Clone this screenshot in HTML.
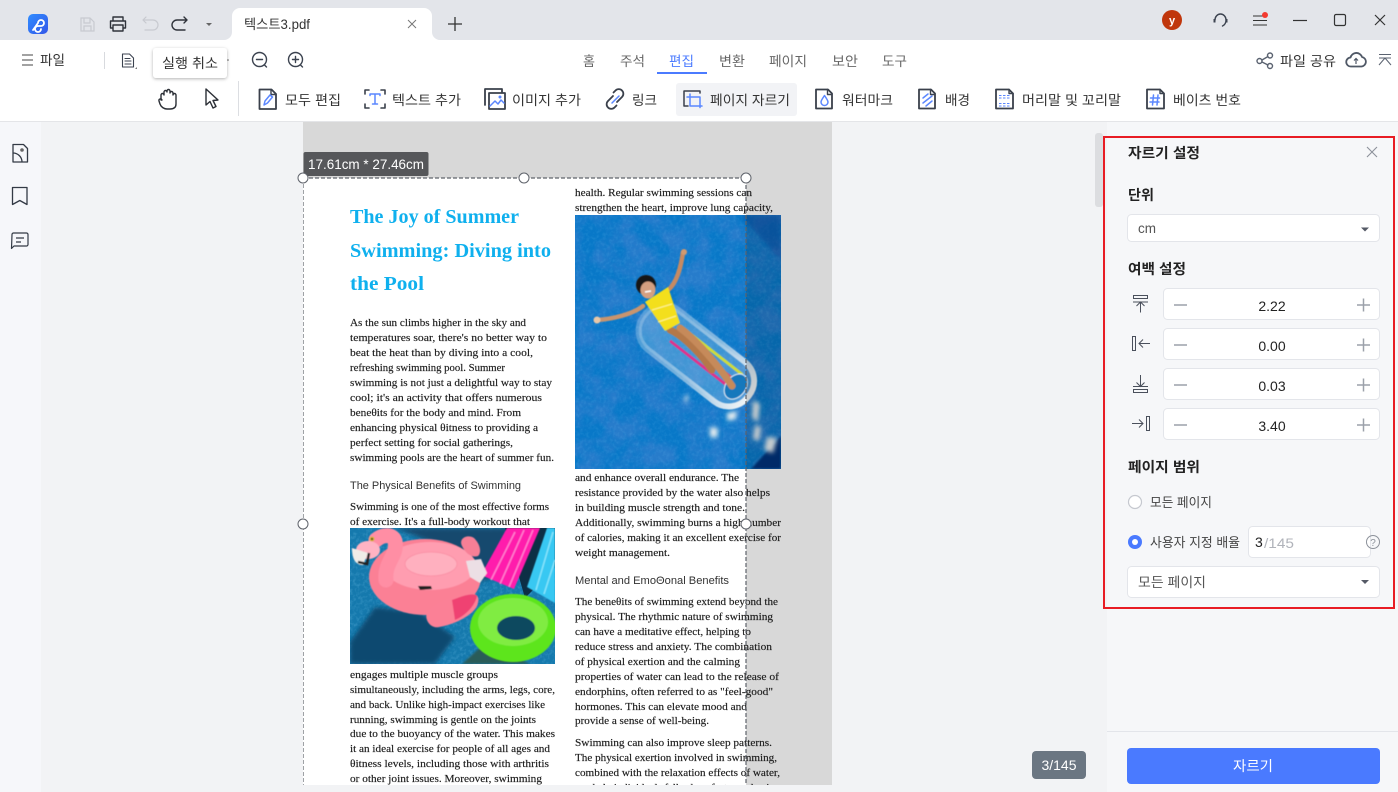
<!DOCTYPE html>
<html lang="ko"><head><meta charset="utf-8"><title>텍스트3.pdf</title>
<style>
html,body{margin:0;padding:0;background:#f2f3f5;width:1398px;height:792px;overflow:hidden}
svg{position:absolute;left:0;top:0;display:block}
text{font-family:"Liberation Sans","Noto Sans CJK KR",sans-serif;white-space:pre}
.k{font-size:13.5px;fill:#333;dominant-baseline:auto}
.tab{font-size:13.5px;fill:#666}
.b{font-size:14px;font-weight:700;fill:#222}
.d text,text.s{font-family:"Liberation Serif","DejaVu Serif",serif;font-size:11px;fill:#1c1c1c;stroke:#1c1c1c;stroke-width:.16}
.h{font-size:11px;fill:#333}
.ic{fill:none;stroke:#3c4350;stroke-width:1.4;stroke-linecap:round;stroke-linejoin:round}
.bl{fill:none;stroke:#5b87ff;stroke-width:1.5;stroke-linecap:round;stroke-linejoin:round}
.fr{fill:#fff;stroke:#e3e5ea;stroke-width:1}
.g{fill:none;stroke:#9ca1aa;stroke-width:1.5}
.v{font-size:14px;fill:#222;text-anchor:middle}
</style></head><body>
<svg width="1398" height="792" viewBox="0 0 1398 792" xmlns="http://www.w3.org/2000/svg">
<defs>
<linearGradient id="lg" x1="0" y1="0" x2="1" y2="1"><stop offset="0" stop-color="#2f8cff"/><stop offset="1" stop-color="#3457e8"/></linearGradient>
<linearGradient id="fg" x1="0" y1="0" x2="1" y2="0"><stop offset="0" stop-color="#cfe4f4" stop-opacity=".3"/><stop offset=".55" stop-color="#dfe9f0" stop-opacity=".55"/><stop offset="1" stop-color="#eef3f5" stop-opacity="1"/></linearGradient>
<filter id="wa" x="0" y="0" width="100%" height="100%"><feTurbulence type="fractalNoise" baseFrequency="0.045" numOctaves="4" seed="5"/><feColorMatrix values="0 0 0 0 0.02  0 0 0 0 0.2  0 0 0 0 0.6  1.8 1.8 0 0 -1.35"/></filter>
<filter id="wb" x="0" y="0" width="100%" height="100%"><feTurbulence type="fractalNoise" baseFrequency="0.3" numOctaves="2" seed="9"/><feColorMatrix values="0 0 0 0 0.3  0 0 0 0 0.72  0 0 0 0 1  1.4 0 0 0 -0.6"/></filter>
<filter id="bl0"><feGaussianBlur stdDeviation=".6"/></filter>
<filter id="bl1"><feGaussianBlur stdDeviation="1"/></filter>
<filter id="bl2"><feGaussianBlur stdDeviation="2.5"/></filter>
<filter id="sh" x="-20%" y="-20%" width="140%" height="150%"><feDropShadow dx="0" dy="1" stdDeviation="1.5" flood-color="#000" flood-opacity=".3"/></filter>
<clipPath id="c1"><rect x="575" y="215" width="206" height="254"/></clipPath>
<clipPath id="c2"><rect x="350" y="528" width="205" height="136"/></clipPath>
<clipPath id="cp"><rect x="303" y="122" width="529" height="663"/></clipPath>
</defs>

<!-- backgrounds -->
<rect width="1398" height="792" fill="#f2f3f5"/>
<rect width="1398" height="40" fill="#e3e5ea"/>
<rect y="40" width="1398" height="81" fill="#fff"/>
<rect y="121" width="1398" height="1" fill="#e4e5e8"/>
<rect y="122" width="41" height="670" fill="#f6f7fa"/>
<rect x="1107" y="122" width="291" height="670" fill="#f6f7f9"/>

<!-- title bar -->
<rect x="28" y="14" width="20" height="20" rx="5" fill="url(#lg)"/>
<path d="M33 30l5-7a3 3 0 1 1 3 3h-3a3 3 0 1 0 3 3" fill="none" stroke="#fff" stroke-width="1.8" stroke-linecap="round"/>
<path d="M81 18h9l4 4v9H81zM84 18v5h6v-5M84 31v-5h7v5" fill="none" stroke="#c8cad0" stroke-width="1.2"/>
<path d="M113 21v-4h10v4M113 28h-2.500v-7h15v7H123M113 25h10v6h-10z" class="ic" style="stroke:#2f333b"/>
<path d="M143 20h10a4.500 4.500 0 0 1 0 10h-8M143 20l3-3M143 20l3 3" fill="none" stroke="#c8cad0" stroke-width="1.2" stroke-linecap="round"/>
<path d="M187 20h-10a4.500 4.500 0 0 0 0 10h8M187 20l-3-3M187 20l-3 3" class="ic" style="stroke:#2f333b"/>
<path d="M206 23h6l-3 3z" fill="#666"/>
<path d="M224 40a8 8 0 0 0 8-8V16a8 8 0 0 1 8-8h184a8 8 0 0 1 8 8v16a8 8 0 0 0 8 8z" fill="#fff"/>
<text x="244" y="29" font-size="13.500" fill="#333" textLength="66" lengthAdjust="spacingAndGlyphs">텍스트3.pdf</text>
<path d="M408 20l8 8M416 20l-8 8" stroke="#777" stroke-width="1" fill="none"/>
<path d="M448 24h14M455 17v14" stroke="#333" stroke-width="1.300" fill="none"/>
<circle cx="1172" cy="20" r="10" fill="#c0360c"/>
<text x="1172" y="24" font-size="11" font-weight="700" fill="#fff" text-anchor="middle">y</text>
<path d="M1215 20a5.500 6 0 0 1 11 0c0 3-1.500 5-3.500 6" class="ic"/><rect x="1213.500" y="19" width="2" height="3.500" fill="#3c4350"/><rect x="1225.500" y="19" width="2" height="3.500" fill="#3c4350"/>
<path d="M1253 16h11M1253 20.500h14M1253 25h14" stroke="#333" stroke-width="1.100" fill="none"/><circle cx="1265" cy="15" r="3" fill="#f33a30"/>
<path d="M1293 20.500h14" stroke="#333" stroke-width="1.200"/>
<rect x="1334.500" y="14.500" width="11" height="11" rx="1.500" fill="none" stroke="#333" stroke-width="1.200"/>
<path d="M1375 15l10 10M1385 15l-10 10" stroke="#333" stroke-width="1.200"/>

<!-- row 2 -->
<path d="M22 55h11M22 60h11M22 65h11" stroke="#444" stroke-width="1"/>
<text x="40" y="65" class="k" textLength="25" lengthAdjust="spacingAndGlyphs">파일</text>
<rect x="104" y="52" width="1" height="17" fill="#d8dade"/>
<path d="M122.500 54h7l4 4v9h-11zM125 58.500h5M125 61h6M125 64h6" class="ic" style="stroke-width:1.100"/>
<path d="M135 69h2v-2z" fill="#777"/>
<circle cx="228" cy="60" r=".8" fill="#666"/>
<circle cx="259.500" cy="59.500" r="7" class="ic"/><path d="M256.500 59.500h6M264.500 65l2 2" class="ic"/>
<circle cx="295.500" cy="59.500" r="7" class="ic"/><path d="M292.500 59.500h6M295.500 56.500v6M300.500 65l2 2" class="ic"/>
<rect x="153" y="48" width="74" height="30" rx="3" fill="#fff" filter="url(#sh)"/>
<text x="162" y="68" class="k" textLength="56" lengthAdjust="spacingAndGlyphs">실행 취소</text>

<text x="583" y="66" class="tab" textLength="12" lengthAdjust="spacingAndGlyphs">홈</text>
<text x="620" y="66" class="tab" textLength="25" lengthAdjust="spacingAndGlyphs">주석</text>
<text x="669" y="66" class="tab" style="fill:#4b7bff" textLength="25" lengthAdjust="spacingAndGlyphs">편집</text>
<rect x="657" y="72" width="50" height="2" fill="#4b7bff"/>
<text x="719" y="66" class="tab" textLength="26" lengthAdjust="spacingAndGlyphs">변환</text>
<text x="769" y="66" class="tab" textLength="38" lengthAdjust="spacingAndGlyphs">페이지</text>
<text x="832" y="66" class="tab" textLength="26" lengthAdjust="spacingAndGlyphs">보안</text>
<text x="882" y="66" class="tab" textLength="25" lengthAdjust="spacingAndGlyphs">도구</text>

<circle cx="1259.500" cy="61" r="2.500" class="ic" style="stroke:#5a6270"/><circle cx="1270" cy="55.500" r="2.500" class="ic" style="stroke:#5a6270"/><circle cx="1270" cy="66" r="2.500" class="ic" style="stroke:#5a6270"/><path d="M1262 60l6-3.500M1262 62l6 3" class="ic" style="stroke:#5a6270"/>
<text x="1280" y="66" class="k" textLength="56" lengthAdjust="spacingAndGlyphs">파일 공유</text>
<path d="M1351 66.500a4.500 4.500 0 0 1-.5-9 6 6 0 0 1 11.500-.5 4.800 4.800 0 0 1-.5 9.500z" fill="none" stroke="#4f5866" stroke-width="1.800" stroke-linejoin="round"/><path d="M1356 64v-5M1354 60.500l2-2 2 2" fill="none" stroke="#4f5866" stroke-width="1.200"/>
<path d="M1379 54.500h12M1379 58h12M1385 58l-6 7M1385 58l6 7" fill="none" stroke="#5a6270" stroke-width="1"/>

<!-- toolbar -->
<path d="M161 100v-5a1.500 1.500 0 0 1 3 0v-3a1.500 1.500 0 0 1 3 0v-1a1.500 1.500 0 0 1 3 0v2a1.500 1.500 0 0 1 3 0v2a1.500 1.500 0 0 1 3 0v9c0 4-3 5-6 5h-3c-3 0-6-2-7-5l-1-3c-.5-2 2-3 3-1z" class="ic" style="stroke:#2b2f36"/>
<path d="M206 89l0 16 4-3.500 3 6.500 3-1.500-3-6 5-.5z" class="ic" style="stroke:#2b2f36"/>
<rect x="238" y="81" width="1" height="35" fill="#dcdee2"/>

<path d="M259.500 89.500h12l4.500 4.500v15h-16.500z" class="ic" style="stroke:#3a404b;stroke-width:1.800"/><path d="M271 89.500v5h5" class="ic"/><path d="M264 105l1-4 5-6 2.500 2-5 6z" class="bl"/>
<text x="285" y="105" class="k" textLength="56" lengthAdjust="spacingAndGlyphs">모두 편집</text>
<path d="M365 94v-4h4M381 90h4v4M385 104v4h-4M369 108h-4v-4" class="ic" style="stroke:#3a404b;stroke-width:1.600"/><path d="M370 94h10M375 94v10M372.500 104h5M370 94v1.500M380 94v1.500" class="bl"/>
<text x="392" y="105" class="k" textLength="69" lengthAdjust="spacingAndGlyphs">텍스트 추가</text>
<path d="M485 105V89h17v3" class="ic" style="stroke:#3a404b;stroke-width:1.800"/><rect x="489" y="93" width="16" height="16" class="ic" style="stroke:#3a404b;stroke-width:1.800"/><path d="M490 106l5-5 3 3 3-4 3 3" class="bl"/><circle cx="500" cy="97" r="1.500" fill="#5b87ff"/>
<text x="512" y="105" class="k" textLength="69" lengthAdjust="spacingAndGlyphs">이미지 추가</text>
<path d="M613 96l-5 5a4.500 4.500 0 0 0 6.500 6.500l2-2M617 102l5-5a4.500 4.500 0 0 0-6.500-6.500l-2 2" class="ic" style="stroke:#3a404b;stroke-width:1.800"/><path d="M612 103l7-7" class="bl"/>
<text x="632" y="105" class="k" textLength="25" lengthAdjust="spacingAndGlyphs">링크</text>
<rect x="676" y="83" width="121" height="33" rx="3" fill="#f2f3f6"/>
<path d="M688 106h-4V91h16v2" class="ic" style="stroke:#3a404b;stroke-width:1.500"/><path d="M690 94v12h12M687 97h13v10.500" class="bl"/>
<text x="710" y="105" class="k" textLength="80" lengthAdjust="spacingAndGlyphs">페이지 자르기</text>
<path d="M816 89.500h12l4 4v15h-16z" class="ic" style="stroke:#3a404b;stroke-width:1.800"/><path d="M827.500 89.500v5h4.500" class="ic"/><path d="M824.500 95.500c2 3 3.500 5 3.500 6.500a3.500 3.500 0 0 1-7 0c0-1.500 1.500-3.500 3.500-6.500z" class="bl"/>
<text x="842" y="105" class="k" textLength="51" lengthAdjust="spacingAndGlyphs">워터마크</text>
<path d="M919 89.500h12l4 4v15h-16z" class="ic" style="stroke:#3a404b;stroke-width:1.800"/><path d="M930.500 89.500v5h4.500" class="ic"/><path d="M923 98l5-4M923 103l9-7M926 106l6-5" class="bl"/>
<text x="945" y="105" class="k" textLength="25" lengthAdjust="spacingAndGlyphs">배경</text>
<path d="M996 89.500h13l4 4v15h-17z" class="ic" style="stroke:#3a404b;stroke-width:1.800"/><path d="M1009 89.500v4h4" class="ic"/><path d="M999 95.500h11M999 98h11M999 103.500h11M999 106h11" fill="none" stroke="#5b87ff" stroke-width="1" stroke-dasharray="2.500 1.500"/>
<text x="1022" y="105" class="k" textLength="99" lengthAdjust="spacingAndGlyphs">머리말 및 꼬리말</text>
<path d="M1147 89.500h13l4 4v15h-17z" class="ic" style="stroke:#3a404b;stroke-width:1.800"/><path d="M1160 89.500v4h4" class="ic"/><path d="M1153.500 95l-1 10M1158 95l-1 10M1150.500 98h9M1150 102h9" class="bl"/>
<text x="1173" y="105" class="k" textLength="68" lengthAdjust="spacingAndGlyphs">베이츠 번호</text>

<!-- left sidebar -->
<path d="M13 144.500h10.500l4 4v13.500H13z" fill="none" stroke="#333a45" stroke-width="1.300" stroke-linejoin="round"/><path d="M13 153c5 0 9 4 9 9" fill="none" stroke="#333a45" stroke-width="1.300"/><circle cx="22" cy="150" r="1.800" fill="#666"/>
<path d="M12.500 187.500h14.500v17l-7.200-4-7.300 4z" fill="none" stroke="#333a45" stroke-width="1.300" stroke-linejoin="round"/>
<path d="M12 234.500a1.500 1.500 0 0 1 1.500-1.500h13a1.500 1.500 0 0 1 1.500 1.500v10a1.500 1.500 0 0 1-1.500 1.500H14l-2.500 2.500zM16 238h8M16 242h5" fill="none" stroke="#333a45" stroke-width="1.200" stroke-linejoin="round"/>

<!-- document -->
<g clip-path="url(#cp)">
<rect x="303" y="122" width="529" height="663" fill="#d8d8d8"/>
<rect x="303" y="178" width="443" height="607" fill="#fff"/>

<g>
<text x="350" y="223" font-size="20" font-weight="700" fill="#0fb0ee" style="font-family:'Liberation Serif',serif" textLength="169" lengthAdjust="spacingAndGlyphs">The Joy of Summer</text>
<text x="350" y="257" font-size="20" font-weight="700" fill="#0fb0ee" style="font-family:'Liberation Serif',serif" textLength="201" lengthAdjust="spacingAndGlyphs">Swimming: Diving into</text>
<text x="350" y="290" font-size="20" font-weight="700" fill="#0fb0ee" style="font-family:'Liberation Serif',serif" textLength="74" lengthAdjust="spacingAndGlyphs">the Pool</text>
</g>
<g class="d">
<text x="350" y="326" textLength="176" lengthAdjust="spacingAndGlyphs">As the sun climbs higher in the sky and</text>
<text x="350" y="341" textLength="197" lengthAdjust="spacingAndGlyphs">temperatures soar, there's no better way to</text>
<text x="350" y="356" textLength="183" lengthAdjust="spacingAndGlyphs">beat the heat than by diving into a cool,</text>
<text x="350" y="371" textLength="155" lengthAdjust="spacingAndGlyphs">refreshing swimming pool. Summer</text>
<text x="350" y="386" textLength="202" lengthAdjust="spacingAndGlyphs">swimming is not just a delightful way to stay</text>
<text x="350" y="401" textLength="192" lengthAdjust="spacingAndGlyphs">cool; it's an activity that offers numerous</text>
<text x="350" y="416" textLength="171" lengthAdjust="spacingAndGlyphs">beneθits for the body and mind. From</text>
<text x="350" y="431" textLength="188" lengthAdjust="spacingAndGlyphs">enhancing physical θitness to providing a</text>
<text x="350" y="446" textLength="163" lengthAdjust="spacingAndGlyphs">perfect setting for social gatherings,</text>
<text x="350" y="461" textLength="204" lengthAdjust="spacingAndGlyphs">swimming pools are the heart of summer fun.</text>
<text x="350" y="510" textLength="199" lengthAdjust="spacingAndGlyphs">Swimming is one of the most effective forms</text>
<text x="350" y="525" textLength="180" lengthAdjust="spacingAndGlyphs">of exercise. It's a full-body workout that</text>
<text x="350" y="678" textLength="148" lengthAdjust="spacingAndGlyphs">engages multiple muscle groups</text>
<text x="350" y="693" textLength="205" lengthAdjust="spacingAndGlyphs">simultaneously, including the arms, legs, core,</text>
<text x="350" y="708" textLength="195" lengthAdjust="spacingAndGlyphs">and back. Unlike high-impact exercises like</text>
<text x="350" y="723" textLength="186" lengthAdjust="spacingAndGlyphs">running, swimming is gentle on the joints</text>
<text x="350" y="737" textLength="205" lengthAdjust="spacingAndGlyphs">due to the buoyancy of the water. This makes</text>
<text x="350" y="752" textLength="200" lengthAdjust="spacingAndGlyphs">it an ideal exercise for people of all ages and</text>
<text x="350" y="767" textLength="199" lengthAdjust="spacingAndGlyphs">θitness levels, including those with arthritis</text>
<text x="350" y="782" textLength="192" lengthAdjust="spacingAndGlyphs">or other joint issues. Moreover, swimming</text>

<text x="575" y="196" textLength="177" lengthAdjust="spacingAndGlyphs">health. Regular swimming sessions can</text>
<text x="575" y="211" textLength="198" lengthAdjust="spacingAndGlyphs">strengthen the heart, improve lung capacity,</text>
<text x="575" y="481" textLength="164" lengthAdjust="spacingAndGlyphs">and enhance overall endurance. The</text>
<text x="575" y="496" textLength="195" lengthAdjust="spacingAndGlyphs">resistance provided by the water also helps</text>
<text x="575" y="511" textLength="170" lengthAdjust="spacingAndGlyphs">in building muscle strength and tone.</text>
<text x="575" y="526" textLength="206" lengthAdjust="spacingAndGlyphs">Additionally, swimming burns a high number</text>
<text x="575" y="541" textLength="206" lengthAdjust="spacingAndGlyphs">of calories, making it an excellent exercise for</text>
<text x="575" y="556" textLength="95" lengthAdjust="spacingAndGlyphs">weight management.</text>
<text x="575" y="605" textLength="203" lengthAdjust="spacingAndGlyphs">The beneθits of swimming extend beyond the</text>
<text x="575" y="620" textLength="198" lengthAdjust="spacingAndGlyphs">physical. The rhythmic nature of swimming</text>
<text x="575" y="635" textLength="176" lengthAdjust="spacingAndGlyphs">can have a meditative effect, helping to</text>
<text x="575" y="650" textLength="197" lengthAdjust="spacingAndGlyphs">reduce stress and anxiety. The combination</text>
<text x="575" y="665" textLength="165" lengthAdjust="spacingAndGlyphs">of physical exertion and the calming</text>
<text x="575" y="680" textLength="204" lengthAdjust="spacingAndGlyphs">properties of water can lead to the release of</text>
<text x="575" y="695" textLength="198" lengthAdjust="spacingAndGlyphs">endorphins, often referred to as "feel-good"</text>
<text x="575" y="710" textLength="172" lengthAdjust="spacingAndGlyphs">hormones. This can elevate mood and</text>
<text x="575" y="724" textLength="134" lengthAdjust="spacingAndGlyphs">provide a sense of well-being.</text>
<text x="575" y="746" textLength="197" lengthAdjust="spacingAndGlyphs">Swimming can also improve sleep patterns.</text>
<text x="575" y="761" textLength="202" lengthAdjust="spacingAndGlyphs">The physical exertion involved in swimming,</text>
<text x="575" y="776" textLength="205" lengthAdjust="spacingAndGlyphs">combined with the relaxation effects of water,</text>
<text x="575" y="791" textLength="205" lengthAdjust="spacingAndGlyphs">can help individuals fall asleep faster and enjoy</text>
</g>
<text x="350" y="489" class="h" textLength="171" lengthAdjust="spacingAndGlyphs">The Physical Benefits of Swimming</text>
<text x="575" y="584" class="h" textLength="154" lengthAdjust="spacingAndGlyphs">Mental and EmoΘonal Benefits</text>

<!-- flamingo image -->
<g clip-path="url(#c2)">
<rect x="350" y="528" width="205" height="136" fill="#1579ad"/>
<rect x="350" y="528" width="205" height="136" filter="url(#wb)" opacity=".35"/>
<path d="M395 528h115l-18 50-30 8-20-40z" fill="#124a6e" filter="url(#bl2)"/>
<path d="M350 664v-22l25-35 45 5 35 25-20 27z" fill="#104a70" filter="url(#bl2)"/>
<path d="M462 664l24-22 44 22z" fill="#2a5b58" filter="url(#bl1)"/>
<path d="M505 528h50v40l-30 30z" fill="#0c2f45"/>
<g filter="url(#bl0)">
<path d="M507 528h33l-26 61-33-14z" fill="#ff1cac"/>
<path d="M515 532l-24 48M524 530l-24 54M533 530l-24 57" stroke="#ff7fd0" stroke-width="1.500" fill="none"/>
<path d="M547 528h8v75l-28-16z" fill="#38c8f2"/>
<path d="M553 532l-17 58M555 560l-11 34" stroke="#86e4fb" stroke-width="1.500" fill="none"/>
<ellipse cx="425" cy="577" rx="56" ry="38" fill="#fb8095"/>
<ellipse cx="430" cy="566" rx="46" ry="24" fill="#ff9db0"/>
<ellipse cx="431" cy="564" rx="26" ry="12" fill="#ffb0bf" stroke="#fb93a7"/>
<path d="M386 580C384 562 398 556 395 541C393 534 383 534 376 540" fill="none" stroke="#ff8ea4" stroke-width="15" stroke-linecap="round"/>
<ellipse cx="368" cy="550" rx="12" ry="9" fill="#ffb3c3"/>
<path d="M352 548c0 12 4 17 11 17l5-12z" fill="#f0ece8"/>
<path d="M358 562l9 2 2-11" fill="none" stroke="#222" stroke-width="2.500"/>
<circle cx="372" cy="539" r="2.500" fill="#d8b030"/><circle cx="372" cy="539" r="1" fill="#222"/>
<path d="M462 546c-4-8 6-12 12-8 6 6 8 14 4 18-6 2-12-2-16-10z" fill="#f77f96"/>
<path d="M466 561l15-2 6 14-7 10-10-6z" fill="#ecdfe5"/>
<path d="M418 586h13l1 3-12 1z" fill="#222"/>
<path d="M427 612c8-10 26-16 40-18 12-2 13 5 10 12-5 10-24 19-38 21-8 2-15-7-12-15z" fill="#fb8096"/>
<path d="M452 600c10-4 22-8 25-4-2 10-12 20-22 24z" fill="#ef4372"/>
<ellipse cx="513" cy="628" rx="43" ry="34" fill="#5de51f"/>
<ellipse cx="513" cy="622" rx="35" ry="24" fill="#9cf25e" opacity=".55"/>
<ellipse cx="516" cy="628" rx="19" ry="12" fill="#0f4a5f"/>
</g>
</g>

<!-- pool image -->
<g clip-path="url(#c1)">
<rect x="575" y="215" width="206" height="254" fill="#0878c8"/>
<rect x="575" y="215" width="206" height="254" filter="url(#wa)"/>
<rect x="575" y="215" width="206" height="254" filter="url(#wb)" opacity=".2"/>
<path d="M740 215h41v45z" fill="#0b4ba5" opacity=".5" filter="url(#bl2)"/>
<path d="M781 436l-30 33h30z" fill="#06327a" filter="url(#bl1)"/>
<g filter="url(#bl0)">
<g transform="translate(697 355) rotate(38)">
<rect x="-66" y="-24" width="132" height="50" rx="24" fill="#9ec8e8" fill-opacity=".35" stroke="url(#fg)" stroke-width="6"/>
<rect x="-22" y="-14" width="70" height="3" fill="#cfdc3a"/>
<rect x="-30" y="-5" width="78" height="3" fill="#d84e70"/>
<rect x="-30" y="4" width="78" height="3" fill="#e0308c"/>
<ellipse cx="50" cy="1" rx="10" ry="14" fill="#1378bc" stroke="#e0eef6" stroke-width="1"/>
</g>
<path d="M643 306c-10 8-30 13-46 14" fill="none" stroke="#c9946e" stroke-width="4.500" stroke-linecap="round"/>
<path d="M668 290c8-6 13-22 15-38" fill="none" stroke="#c68a62" stroke-width="4.500" stroke-linecap="round"/>
<circle cx="597" cy="320" r="3.500" fill="#e8c8a8"/><circle cx="684" cy="252" r="3" fill="#d09a70"/>
<path d="M670 330c14 6 32 26 42 40" fill="none" stroke="#b4784a" stroke-width="7" stroke-linecap="round"/>
<path d="M680 328c14 10 36 34 52 58" fill="none" stroke="#c68a5a" stroke-width="7" stroke-linecap="round"/>
<path d="M645 302l23-15 12 36-15 8z" fill="#f3df1c"/>
<path d="M652 310l20-6M658 322l18-6" stroke="#fff39a" stroke-width="1" fill="none"/>
<circle cx="646" cy="285" r="10" fill="#141414"/>
<ellipse cx="648" cy="290" rx="7.500" ry="8.500" fill="#d39f80"/>
<path d="M645 292l6-1" stroke="#fff" stroke-width="1.500"/>
</g>
<g fill="#e8eef0" filter="url(#bl2)"><path d="M727 413l10-2-1 8-9 2zM710 427l8 1-1 10-7-1zM753 400l7 4-2 18-6-4zM755 425l6 2-2 14-6-2zM767 437l10 1-4 15-9-3zM686 404l3-10-5 4z"/></g>
</g>

<!-- dim overlay on the part of the image outside the crop -->
<rect x="746" y="215" width="35" height="254" fill="#000" opacity=".14"/>
<path d="M303 178H746V785M303 178V785" fill="none" stroke="#5f636b" stroke-width="1.200" stroke-dasharray="4 2"/>
</g>
<rect x="303.500" y="152" width="125" height="24" rx="2" fill="#56575a"/>
<text x="308" y="169" font-size="14" fill="#fff" textLength="116" lengthAdjust="spacingAndGlyphs">17.61cm * 27.46cm</text>
<g fill="#fff" stroke="#5f636b" stroke-width="1"><circle cx="303" cy="178" r="5"/><circle cx="524" cy="178" r="5"/><circle cx="746" cy="178" r="5"/><circle cx="303" cy="524" r="5"/><circle cx="746" cy="524" r="5"/></g>

<!-- scrollbar -->
<rect x="1095" y="133" width="8" height="74" rx="3" fill="#dcdde0"/>

<!-- page badge -->
<rect x="1032" y="751" width="54" height="28" rx="4" fill="#6b7682"/>
<text x="1059" y="770" font-size="14" fill="#fff" text-anchor="middle">3/145</text>

<!-- right panel -->
<rect x="1104" y="137" width="290" height="471" fill="none" stroke="#e81c24" stroke-width="2"/>
<text x="1128" y="158" class="b" textLength="72" lengthAdjust="spacingAndGlyphs">자르기 설정</text>
<path d="M1367 147l10 10M1377 147l-10 10" stroke="#8c919a" stroke-width="1.100"/>
<text x="1128" y="200" class="b" textLength="26" lengthAdjust="spacingAndGlyphs">단위</text>
<rect x="1127.500" y="214.500" width="252" height="27" rx="4" class="fr"/>
<text x="1138" y="233" font-size="13.500" fill="#555">cm</text>
<path d="M1361 227.500h8l-4 4z" fill="#555a66"/>
<text x="1128" y="274" class="b" textLength="58" lengthAdjust="spacingAndGlyphs">여백 설정</text>

<rect x="1163.500" y="288.500" width="216" height="31" rx="4" class="fr"/>
<path d="M1174 305h13M1357 305h13M1363.500 298.500v13" class="g"/><text x="1272" y="311" class="v">2.22</text>
<rect x="1163.500" y="328.500" width="216" height="31" rx="4" class="fr"/>
<path d="M1174 345h13M1357 345h13M1363.500 338.500v13" class="g"/><text x="1272" y="351" class="v">0.00</text>
<rect x="1163.500" y="368.500" width="216" height="31" rx="4" class="fr"/>
<path d="M1174 385h13M1357 385h13M1363.500 378.500v13" class="g"/><text x="1272" y="391" class="v">0.03</text>
<rect x="1163.500" y="408.500" width="216" height="31" rx="4" class="fr"/>
<path d="M1174 425h13M1357 425h13M1363.500 418.500v13" class="g"/><text x="1272" y="431" class="v">3.40</text>

<g fill="none" stroke="#4a505c" stroke-width="1">
<rect x="1133.500" y="295.500" width="14" height="3"/><path d="M1133 302h15M1140.500 312.500v-10M1136.500 306l4-4 4 4"/>
<rect x="1132.500" y="336.500" width="3" height="14"/><path d="M1139 343.500h11M1143 339.500l-4 4 4 4"/>
<rect x="1133.500" y="389.500" width="14" height="3"/><path d="M1133 386.500h15M1140.500 375v11M1136.500 382.500l4 4 4-4"/>
<rect x="1146.500" y="416.500" width="3" height="14"/><path d="M1132 423.500h11M1139 419.500l4 4-4 4"/>
</g>

<text x="1128" y="472" class="b" textLength="72" lengthAdjust="spacingAndGlyphs">페이지 범위</text>
<circle cx="1135" cy="502" r="6.500" fill="#fff" stroke="#c5c8cf" stroke-width="1.200"/>
<text x="1150" y="507" font-size="13" fill="#444" textLength="62" lengthAdjust="spacingAndGlyphs">모든 페이지</text>
<circle cx="1135" cy="542" r="7" fill="#4a7aff"/><circle cx="1135" cy="542" r="3" fill="#fff"/>
<text x="1150" y="547" font-size="13" fill="#444" textLength="90" lengthAdjust="spacingAndGlyphs">사용자 지정 배율</text>
<rect x="1248.500" y="526.500" width="122" height="31" rx="4" class="fr"/>
<text x="1255" y="547" font-size="14" fill="#222">3</text>
<text x="1264" y="548" font-size="14" fill="#b0b3ba" textLength="30" lengthAdjust="spacingAndGlyphs">/145</text>
<circle cx="1373" cy="542" r="6.500" fill="none" stroke="#8c919a" stroke-width="1"/>
<text x="1373" y="546" font-size="10" fill="#8c919a" text-anchor="middle">?</text>
<rect x="1127.500" y="566.500" width="252" height="31" rx="4" class="fr"/>
<text x="1138" y="587" font-size="13.500" fill="#555" textLength="68" lengthAdjust="spacingAndGlyphs">모든 페이지</text>
<path d="M1361 580h8l-4 4z" fill="#555a66"/>

<rect x="1107" y="731" width="291" height="1" fill="#e3e5ea"/>
<rect x="1127" y="748" width="253" height="36" rx="4" fill="#4a7aff"/>
<text x="1253" y="771" font-size="14" fill="#fff" text-anchor="middle" textLength="40" lengthAdjust="spacingAndGlyphs">자르기</text>
</svg>
</body></html>
